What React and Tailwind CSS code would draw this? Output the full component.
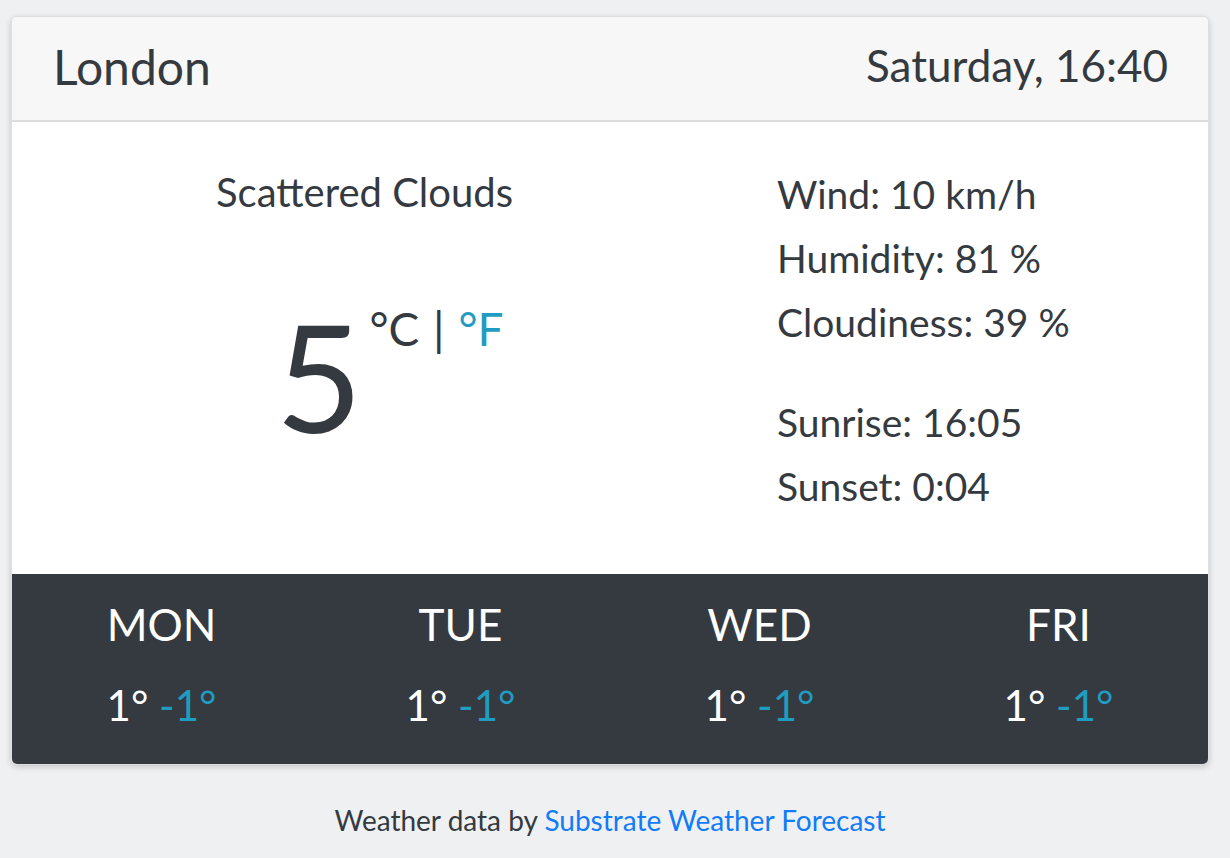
import React from "react";

const font = { fontFamily: "Lato, 'Noto Sans', sans-serif" };

export default function App() {
  const forecast = ["MON", "TUE", "WED", "FRI"];
  return (
    <div className="w-[1230px] h-[858px] bg-[#eef0f2] text-[#343a40] pt-[16px]" style={font}>
      <div className="ml-[11px] w-[1198px] rounded-[6px] border border-[#dcdee0] shadow-[0_2px_6px_rgba(0,0,0,0.18)] overflow-hidden bg-white">
        <div className="h-[105px] bg-[#f7f7f7] border-b-2 border-[#dcdcdc] flex items-center justify-between pl-[41px] pr-[40px]">
          <div className="text-[48px] leading-none pb-[3px]">London</div>
          <div className="text-[44px] leading-none pb-[8px]">Saturday, 16:40</div>
        </div>
        <div className="h-[452px] flex">
          <div className="w-[705px] flex flex-col items-center">
            <div className="text-[40px] leading-none mt-[50px]">Scattered Clouds</div>
            <div className="flex items-start mt-[88px] pl-[50px]">
              <div className="text-[150px] leading-none">5</div>
              <div className="text-[46px] leading-none ml-[7px] mt-[6px]">
                °C <span className="mx-[2px]">|</span> <span className="text-[#1f9cc0]">°F</span>
              </div>
            </div>
          </div>
          <div className="pl-[60px] pt-[40px] text-[39px] leading-[64px]">
            <div>Wind: 10 km/h</div>
            <div>Humidity: 81 %</div>
            <div>Cloudiness: 39 %</div>
            <div className="mt-[36px]">Sunrise: 16:05</div>
            <div>Sunset: 0:04</div>
          </div>
        </div>
        <div className="h-[190px] bg-[#343a40] grid grid-cols-4 text-white">
          {forecast.map((d) => (
            <div key={d} className="flex flex-col items-center">
              <div className="text-[44px] leading-none mt-[28px]">{d}</div>
              <div className="text-[42px] leading-none mt-[38px]">
                1° <span className="text-[#1f9cc0]">-1°</span>
              </div>
            </div>
          ))}
        </div>
      </div>
      <div className="ml-[11px] w-[1198px] text-center text-[28px] mt-[34px]">
        Weather data by <span className="text-[#127bf7]">Substrate Weather Forecast</span>
      </div>
    </div>
  );
}
